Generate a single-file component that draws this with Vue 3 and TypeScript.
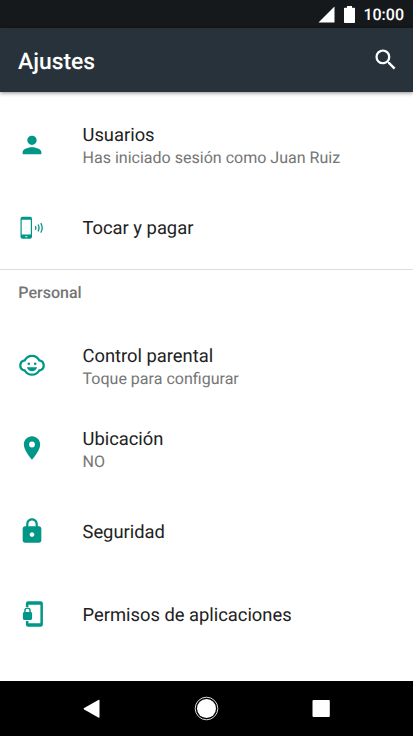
<script setup lang="ts">
type IconName = 'person' | 'tap' | 'face' | 'pin' | 'lock' | 'permissions'

interface Item {
  icon: IconName
  title: string
  summary?: string
}

interface Section {
  heading?: string
  items: Item[]
}

const sections: Section[] = [
  {
    items: [
      { icon: 'person', title: 'Usuarios', summary: 'Has iniciado sesión como Juan Ruiz' },
      { icon: 'tap', title: 'Tocar y pagar' },
    ],
  },
  {
    heading: 'Personal',
    items: [
      { icon: 'face', title: 'Control parental', summary: 'Toque para configurar' },
      { icon: 'pin', title: 'Ubicación', summary: 'NO' },
      { icon: 'lock', title: 'Seguridad' },
      { icon: 'permissions', title: 'Permisos de aplicaciones' },
    ],
  },
]
</script>

<template>
  <div class="screen">
    <div class="status">
      <svg class="signal" viewBox="0 0 17 17"><path d="M0.5 16.5 16.5 .5v16z" /></svg>
      <svg class="battery" viewBox="0 0 11 17"><path d="M3 0h5v1.800h2.200q.8 0 .8.8v13.600q0 .8-.8.8H.8q-.8 0-.8-.8V2.600q0-.8.8-.8H3z" /></svg>
      <span class="clock">10:00</span>
    </div>
    <header class="bar">
      <h1>Ajustes</h1>
      <svg class="search" viewBox="0 0 24 24">
        <path d="M15.500 14h-.79l-.28-.27A6.470 6.470 0 0 0 16 9.500 6.500 6.500 0 1 0 9.500 16c1.610 0 3.090-.59 4.230-1.570l.27.28v.79l5 4.990L20.490 19l-4.990-5zm-6 0C7.010 14 5 11.990 5 9.500S7.010 5 9.500 5 14 7.010 14 9.500 11.990 14 9.500 14z" />
      </svg>
    </header>
    <main class="content">
      <section v-for="(section, i) in sections" :key="i" class="section">
        <h2 v-if="section.heading">{{ section.heading }}</h2>
        <div v-for="item in section.items" :key="item.title" class="row">
          <svg v-if="item.icon === 'person'" class="icon" viewBox="0 0 24 24">
            <path d="M12 12c2.210 0 4-1.790 4-4s-1.790-4-4-4-4 1.790-4 4 1.790 4 4 4zm0 2c-2.670 0-8 1.340-8 4v2h16v-2c0-2.660-5.330-4-8-4z" />
          </svg>
          <svg v-else-if="item.icon === 'tap'" class="icon" viewBox="0 0 28 28">
            <path fill-rule="evenodd" d="M4.500 2.800h7.500q2 0 2 2v18q0 2-2 2H4.500q-2 0-2-2v-18q0-2 2-2zM3.700 5.700v14.800h9.100V5.700zM7.300 22.300h2v1h-2z" />
            <path class="wave" d="M17.300 12q1.300 1.900 0 3.800M20 10.500q2.100 3.400 0 6.800M22.800 9.100q2.800 4.800 0 9.600" />
          </svg>
          <svg v-else-if="item.icon === 'face'" class="icon" viewBox="0 0 28 28">
            <path class="outline" d="M6.700 9.400C8.300 6.400 11 4.800 14 4.800s5.700 1.600 7.300 4.600c2.600.5 4.400 2.600 4.400 5.100s-1.800 4.500-4.400 5C19.700 22.200 17 23.700 14 23.700S8.300 22.200 6.700 19.500c-2.600-.5-4.400-2.500-4.400-5s1.800-4.600 4.400-5.100z" />
            <circle cx="10.800" cy="12.700" r="1.300" />
            <circle cx="17.200" cy="12.700" r="1.300" />
            <path d="M8.900 16.200h10.200c-.8 2.600-2.700 4-5.100 4s-4.300-1.400-5.100-4z" />
          </svg>
          <svg v-else-if="item.icon === 'pin'" class="icon" viewBox="0 0 24 24">
            <path d="M12 2C8.130 2 5 5.130 5 9c0 5.250 7 13 7 13s7-7.750 7-13c0-3.870-3.130-7-7-7zm0 9.500a2.500 2.500 0 0 1 0-5 2.500 2.500 0 0 1 0 5z" />
          </svg>
          <svg v-else-if="item.icon === 'lock'" class="icon" viewBox="0 0 24 24">
            <path d="M18 8h-1V6c0-2.760-2.240-5-5-5S7 3.240 7 6v2H6c-1.100 0-2 .9-2 2v10c0 1.100.9 2 2 2h12c1.100 0 2-.9 2-2V10c0-1.100-.9-2-2-2zm-6 9c-1.100 0-2-.9-2-2s.9-2 2-2 2 .9 2 2-.9 2-2 2zm3.100-9H8.900V6c0-1.710 1.390-3.100 3.100-3.100s3.100 1.390 3.100 3.100v2z" />
          </svg>
          <svg v-else class="icon" viewBox="0 0 28 28">
            <path d="M10.200 1.200h12.400q2.300 0 2.300 2.300v21q0 2.300-2.300 2.300H10.200q-2.300 0-2.300-2.300V21h2.500v2.300h12V4.700h-12V7H7.900V3.500q0-2.300 2.300-2.300z" />
            <path d="M6.200 12.100v-1.400a3.300 3.300 0 0 1 6.600 0v1.400q1.300.1 1.300 1.400v5q0 1.400-1.400 1.400H6.300q-1.400 0-1.400-1.400v-5q0-1.300 1.300-1.400zm1.400 0h3.800v-1.400a1.900 1.900 0 0 0-3.800 0z" />
          </svg>
          <div class="text" :class="{ double: item.summary }">
            <div class="title">{{ item.title }}</div>
            <div v-if="item.summary" class="summary">{{ item.summary }}</div>
          </div>
        </div>
      </section>
    </main>
    <nav class="nav">
      <svg viewBox="0 0 24 24"><path d="M4.200 11 18.300 3q1.200-.6 1.200.6v16.400q0 1.200-1.200.6L4.200 12.600q-1.400-.8 0-1.600z" /></svg>
      <svg viewBox="0 0 24 24"><circle cx="11.500" cy="11.500" r="9.500" /><circle class="ring" cx="11.500" cy="11.500" r="11.300" /></svg>
      <svg viewBox="0 0 24 24"><rect x="3.500" y="3" width="17.300" height="17" rx="1" /></svg>
    </nav>
  </div>
</template>

<style>
body {
  margin: 0;
}
</style>

<style scoped>
.screen {
  display: flex;
  flex-direction: column;
  width: 413px;
  height: 736px;
  overflow: hidden;
  background: #fff;
  font-family: Roboto, sans-serif;
  text-rendering: geometricPrecision;
}
.status {
  display: flex;
  flex: none;
  align-items: center;
  justify-content: flex-end;
  height: 28px;
  padding-right: 9px;
  box-sizing: border-box;
  background: #15191c;
  color: #fff;
  fill: #fff;
}
.signal {
  width: 17px;
  height: 17px;
  margin-right: 9px;
}
.battery {
  width: 11px;
  height: 17px;
  margin-right: 8px;
}
.clock {
  padding-top: 2px;
  font-size: 16px;
  font-weight: 500;
  line-height: 26px;
}
.bar {
  display: flex;
  flex: none;
  align-items: center;
  justify-content: space-between;
  height: 64px;
  padding: 0 14px 0 18px;
  box-sizing: border-box;
  background: #27323a;
  box-shadow: 0 1px 4px rgba(0, 0, 0, 0.45);
}
h1 {
  margin: 3px 0 0;
  color: #fff;
  font-size: 22.900px;
  font-weight: 500;
  line-height: 28px;
}
.search {
  width: 27.500px;
  height: 27.500px;
  fill: #fff;
}
.content {
  flex: 1;
  padding-top: 11px;
}
.section + .section {
  border-top: 1px solid #dcdcdc;
}
h2 {
  height: 54px;
  margin: 0;
  padding-left: 18.300px;
  color: #757575;
  font-size: 16.050px;
  font-weight: 500;
  line-height: 46px;
}
.row {
  display: flex;
  align-items: center;
  height: 83px;
  padding-left: 18px;
}
.icon {
  flex: none;
  width: 28px;
  height: 28px;
  margin: 0 36.500px 1px 0;
  fill: #009688;
}
.section:first-child .icon {
  margin-bottom: 0;
}
.wave {
  fill: none;
  stroke: #009688;
  stroke-width: 1.300;
}
.outline {
  fill: none;
  stroke: #009688;
  stroke-width: 2.300;
}
.text {
  padding-top: 1px;
}
.text.double {
  padding-top: 4px;
}
.title {
  color: #212121;
  font-size: 18.350px;
  line-height: 23px;
}
.summary {
  color: #757575;
  font-size: 16.050px;
  line-height: 22px;
}
.nav {
  display: flex;
  flex: none;
  align-items: center;
  justify-content: space-between;
  height: 55px;
  padding: 0 80px;
  background: #000;
  fill: #fff;
}
.nav svg {
  width: 24px;
  height: 24px;
  overflow: visible;
}
.ring {
  fill: none;
  stroke: #ddd;
  stroke-width: 1;
}
</style>
